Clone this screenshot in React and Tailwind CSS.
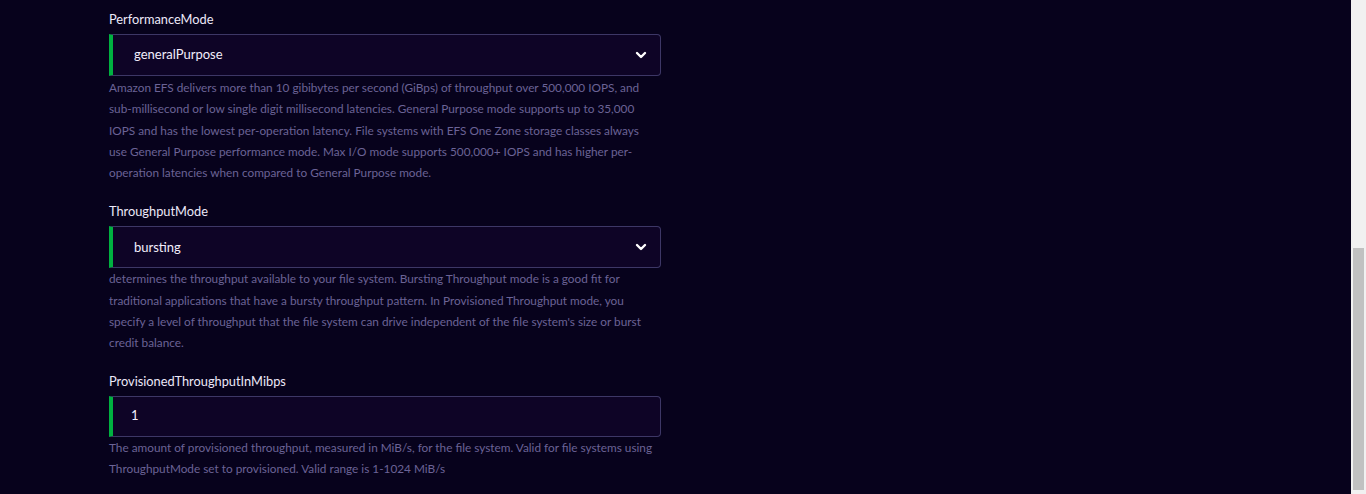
import React from "react";

const font = { fontFamily: "Lato, 'Noto Sans', sans-serif" };

function Chevron() {
  return (
    <svg width="12" height="8" viewBox="0 0 12 8" fill="none">
      <path d="M2 2 L6 6 L10 2" stroke="#ffffff" strokeWidth="2.4" strokeLinecap="round" strokeLinejoin="round" />
    </svg>
  );
}

function Field({ label, value, select, desc, top, h, descTop }) {
  return (
    <div className={top}>
      <div className="text-[12.8px] leading-[18px] text-[#ece8f8] mb-[6px]">{label}</div>
      <div className={`${h} w-[552px] flex items-center bg-[#0e0426] border border-[#3d3766] border-l-[4px] border-l-[#00b140] rounded-r-[4px] pl-[20px] pr-[13px]`}>
        <span className={select ? "text-[13px] text-[#f2eefc] flex-1 ml-[1px]" : "text-[13px] text-[#f2eefc] flex-1 -ml-[2px]"}>{value}</span>
        {select && <Chevron />}
      </div>
      <p className={`${descTop} text-[11.8px] leading-[21.3px] text-[#6b6396] w-[546px]`}>{desc}</p>
    </div>
  );
}

export default function App() {
  return (
    <div className="flex h-[494px] w-full overflow-hidden bg-[#07021c]" style={font}>
      <div className="flex-1 pl-[109px] pt-[10px]">
        <Field
          h="h-[42px]"
          descTop="pt-[1px]"
          label="PerformanceMode"
          value="generalPurpose"
          select
          desc="Amazon EFS delivers more than 10 gibibytes per second (GiBps) of throughput over 500,000 IOPS, and sub-millisecond or low single digit millisecond latencies. General Purpose mode supports up to 35,000 IOPS and has the lowest per-operation latency. File systems with EFS One Zone storage classes always use General Purpose performance mode. Max I/O mode supports 500,000+ IOPS and has higher per-operation latencies when compared to General Purpose mode."
        />
        <Field
          top="mt-[19px]"
          h="h-[42px]"
          descTop="pt-0"
          label="ThroughputMode"
          value="bursting"
          select
          desc="determines the throughput available to your file system. Bursting Throughput mode is a good fit for traditional applications that have a bursty throughput pattern. In Provisioned Throughput mode, you specify a level of throughput that the file system can drive independent of the file system's size or burst credit balance."
        />
        <Field
          top="mt-[18px]"
          h="h-[41px]"
          descTop="pt-0"
          label="ProvisionedThroughputInMibps"
          value="1"
          desc="The amount of provisioned throughput, measured in MiB/s, for the file system. Valid for file systems using ThroughputMode set to provisioned. Valid range is 1-1024 MiB/s"
        />
      </div>
      <div className="w-[15px] h-full bg-[#f1f1f1] flex flex-col">
        <div className="h-[248px]" />
        <div className="h-[242px] mx-[2px] bg-[#c1c1c1]" />
      </div>
    </div>
  );
}
